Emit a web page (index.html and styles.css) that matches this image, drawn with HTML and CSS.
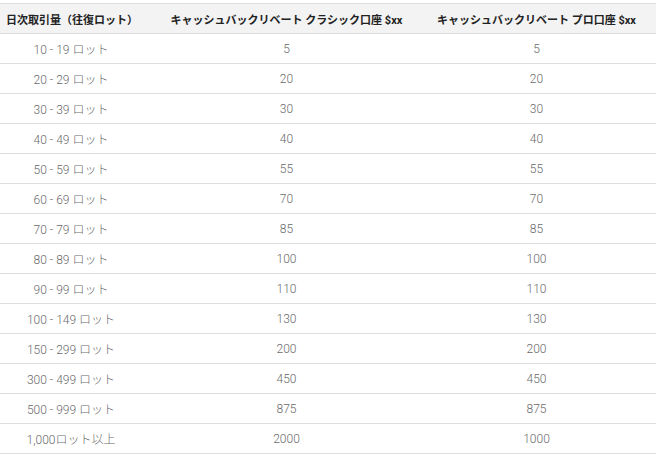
FILE: index.html
```html
<!DOCTYPE html>
<html lang="ja">
<head>
<meta charset="utf-8">
<link rel="stylesheet" href="styles.css">
</head>
<body>
<table class="rebate">
  <colgroup>
    <col class="c1"><col class="c2"><col class="c3">
  </colgroup>
  <thead>
    <tr>
      <th>日次取引量（往復ロット）</th>
      <th>キャッシュバックリベート クラシック口座 $xx</th>
      <th class="last">キャッシュバックリベート プロ口座 $xx</th>
    </tr>
  </thead>
  <tbody>
    <tr><td>10 - 19 ロット</td><td>5</td><td class="last">5</td></tr>
    <tr><td>20 - 29 ロット</td><td>20</td><td class="last">20</td></tr>
    <tr><td>30 - 39 ロット</td><td>30</td><td class="last">30</td></tr>
    <tr><td>40 - 49 ロット</td><td>40</td><td class="last">40</td></tr>
    <tr><td>50 - 59 ロット</td><td>55</td><td class="last">55</td></tr>
    <tr><td>60 - 69 ロット</td><td>70</td><td class="last">70</td></tr>
    <tr><td>70 - 79 ロット</td><td>85</td><td class="last">85</td></tr>
    <tr><td>80 - 89 ロット</td><td>100</td><td class="last">100</td></tr>
    <tr><td>90 - 99 ロット</td><td>110</td><td class="last">110</td></tr>
    <tr><td>100 - 149 ロット</td><td>130</td><td class="last">130</td></tr>
    <tr><td>150 - 299 ロット</td><td>200</td><td class="last">200</td></tr>
    <tr><td>300 - 499 ロット</td><td>450</td><td class="last">450</td></tr>
    <tr><td>500 - 999 ロット</td><td>875</td><td class="last">875</td></tr>
    <tr><td>1,000ロット以上</td><td>2000</td><td class="last">1000</td></tr>
  </tbody>
</table>
</body>
</html>
```
FILE: styles.css
```css
html, body {
  margin: 0;
  padding: 0;
  background: #ffffff;
}
body {
  padding-top: 3px;
  font-family: Roboto, "Noto Sans CJK JP", sans-serif;
}
.rebate {
  width: 656px;
  border-collapse: collapse;
  table-layout: fixed;
}
.c1 { width: 142px; }
.c2 { width: 289px; }
.c3 { width: 225px; }
.rebate th,
.rebate td {
  height: 29px;
  padding: 0 6px;
  text-align: center;
  vertical-align: middle;
  white-space: nowrap;
  border-bottom: 1px solid #dddddd;
}
.rebate th {
  border-top: 1px solid #dddddd;
  background: #f3f3f3;
  color: #222222;
  font-size: 11px;
  font-weight: 700;
}
.rebate td {
  color: #6a6a6a;
  font-size: 12px;
  font-weight: 300;
}
.rebate .last {
  padding-right: 20px;
}
```
